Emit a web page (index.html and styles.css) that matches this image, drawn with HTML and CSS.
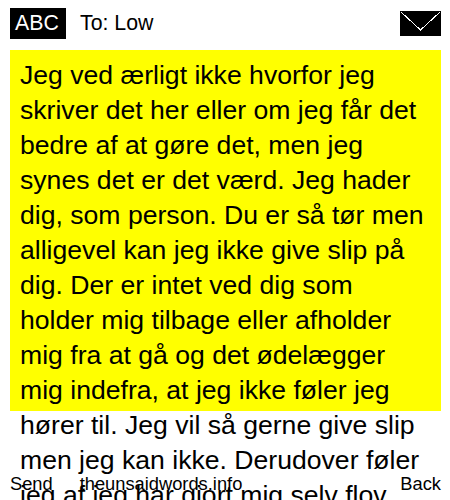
FILE: index.html
```html
<!DOCTYPE html>
<html lang="en">
<head>
    <meta charset="UTF-8">
    <meta name="viewport" content="width=device-width, initial-scale=1.0">
    <title>The Unsaid Words</title>
    <link rel="stylesheet" href="styles.css">
</head>
<body>
    <div class="top-bar">
        <div class="abc">ABC</div>
        <div class="to">To: Low</div>
        <svg class="envelope" width="41" height="25" viewBox="0 0 41 25" shape-rendering="crispEdges">
            <rect width="41" height="25" fill="#000"/>
            <path d="M1 1 L20.5 19 L40 1" fill="none" stroke="#fff" stroke-width="1"/>
        </svg>
    </div>
    <div class="message">
        <p>Jeg ved ærligt ikke hvorfor jeg skriver det her eller om jeg får det bedre af at gøre det, men jeg synes det er det værd. Jeg hader dig, som person. Du er så tør men alligevel kan jeg ikke give slip på dig. Der er intet ved dig som holder mig tilbage eller afholder mig fra at gå og det ødelægger mig indefra, at jeg ikke føler jeg hører til. Jeg vil så gerne give slip men jeg kan ikke. Derudover føler jeg af jeg har gjort mig selv flov</p>
    </div>
    <div class="bottom-bar">
        <span class="send">Send</span>
        <span class="site">theunsaidwords.info</span>
        <span class="back">Back</span>
    </div>
</body>
</html>
```

FILE: styles.css
```css
html, body {
    height: 500px;
    overflow: hidden;
}
body {
    font-family: "Liberation Sans", Arial, sans-serif;
    margin: 0;
    background: #fff;
    color: #000;
    position: relative;
}
.top-bar {
    display: flex;
    align-items: center;
    height: 31px;
    padding: 8px 9px 0 10px;
}
.abc {
    background: #000;
    color: #fff;
    font-size: 21.3px;
    width: 51px;
    height: 31px;
    line-height: 31px;
    padding-left: 5px;
}
.to {
    font-size: 21.3px;
    margin-left: 14px;
    flex: 1;
}
.envelope {
    display: block;
}
.message {
    background: #ff0;
    height: 361px;
    margin: 11px 9px 0 10px;
    padding: 0 17px 0 10px;
}
.message p {
    margin: 0;
    padding-top: 8px;
    font-size: 26.6px;
    line-height: 35px;
}
.bottom-bar {
    position: absolute;
    left: 10px;
    right: 9px;
    bottom: 0;
    height: 28px;
    font-size: 18.3px;
    line-height: 24px;
    display: flex;
}
.site {
    margin-left: 27px;
    flex: 1;
}
```
